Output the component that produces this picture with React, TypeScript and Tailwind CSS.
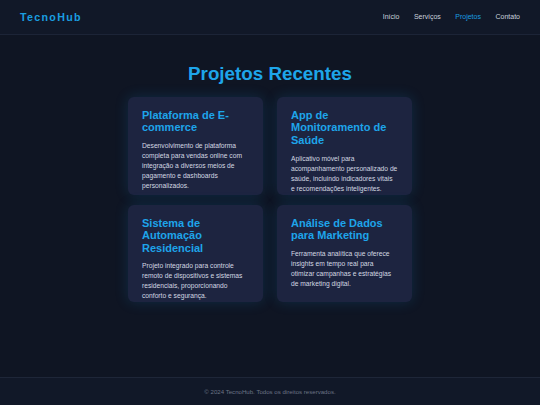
import React from "react";

const projects = [
  {
    title: "Plataforma de E-commerce",
    desc: "Desenvolvimento de plataforma completa para vendas online com integração a diversos meios de pagamento e dashboards personalizados.",
  },
  {
    title: "App de Monitoramento de Saúde",
    desc: "Aplicativo móvel para acompanhamento personalizado de saúde, incluindo indicadores vitais e recomendações inteligentes.",
  },
  {
    title: "Sistema de Automação Residencial",
    desc: "Projeto integrado para controle remoto de dispositivos e sistemas residenciais, proporcionando conforto e segurança.",
  },
  {
    title: "Análise de Dados para Marketing",
    desc: "Ferramenta analítica que oferece insights em tempo real para otimizar campanhas e estratégias de marketing digital.",
  },
];

export default function App() {
  return (
    <div
      className="flex h-[405px] w-full flex-col bg-[#0f1523] text-white"
      style={{ fontFamily: '"Liberation Sans", Arial, sans-serif' }}
    >
      <header className="flex h-[35px] shrink-0 items-center justify-between border-b border-[#1c2437] bg-[#111828] px-5">
        <div className="text-[10.7px] font-bold tracking-[1.3px] text-[#1a9ee0]">TecnoHub</div>
        <nav className="flex items-center gap-[14.5px] text-[7px] text-[#c9d1dc]">
          <span>Início</span>
          <span>Serviços</span>
          <span className="text-[#1a9ee0]">Projetos</span>
          <span>Contato</span>
        </nav>
      </header>
      <main className="flex flex-1 flex-col items-center pt-[27px]">
        <h1 className="text-[18.8px] font-bold leading-[23px] text-[#1ea5ea]">Projetos Recentes</h1>
        <div className="mt-[12px] grid w-[284px] grid-cols-2 gap-x-[14px] gap-y-[10px]">
          {projects.map((p) => (
            <div
              key={p.title}
              className="rounded-[6px] bg-[#1d2440] px-[14px] pb-[1px] pt-[12px] shadow-[0_0_14px_rgba(20,150,230,0.18)]"
            >
              <h2 className="text-[11px] font-bold leading-[12.4px] text-[#1ea5ea]">{p.title}</h2>
              <p className="mt-[7.5px] text-[6.7px] leading-[10px] text-[#d3d8e2]">{p.desc}</p>
            </div>
          ))}
        </div>
      </main>
      <footer className="flex h-[28px] shrink-0 items-center justify-center border-t border-[#1e2638] bg-[#111828] text-[6.1px] text-[#6b7385]">
        © 2024 TecnoHub. Todos os direitos reservados.
      </footer>
    </div>
  );
}
